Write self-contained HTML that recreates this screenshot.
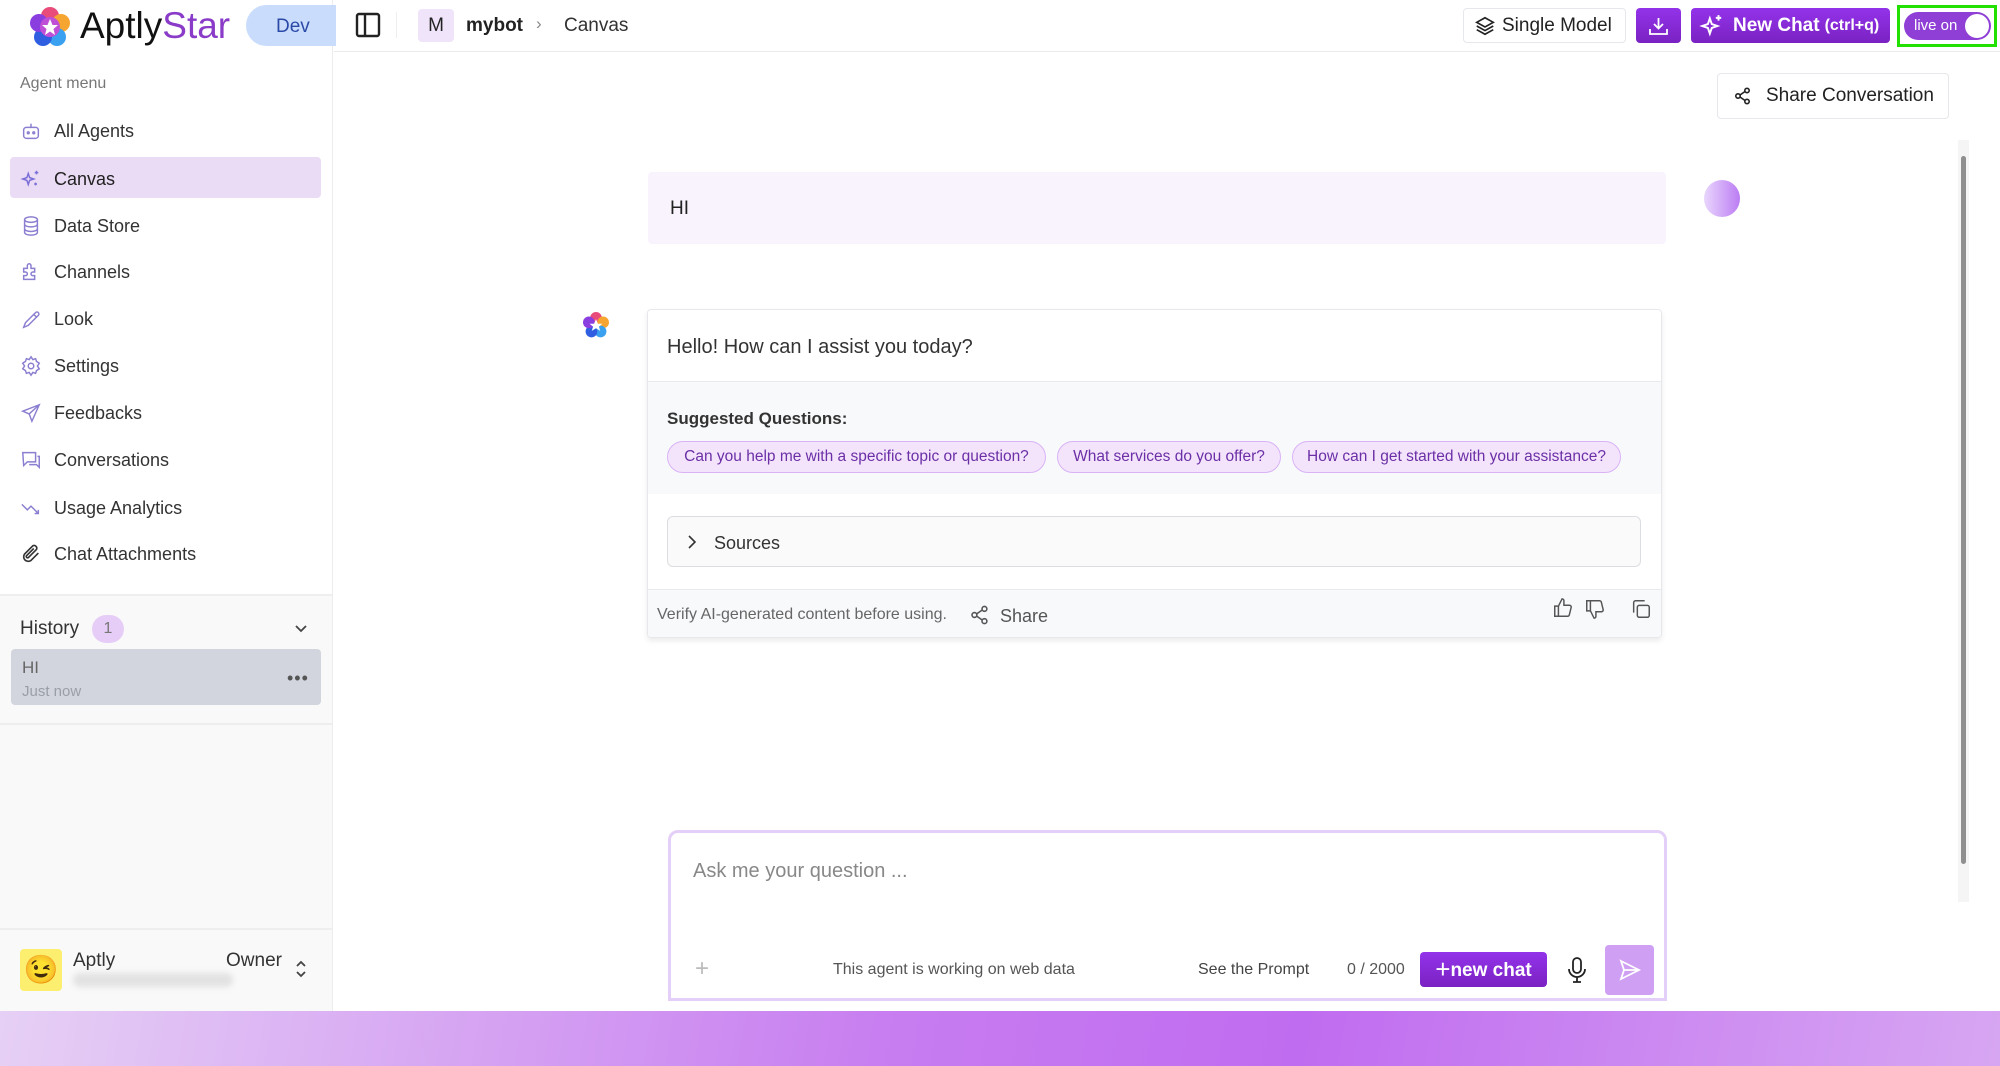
<!DOCTYPE html>
<html><head><meta charset="utf-8"><style>
*{box-sizing:border-box;margin:0;padding:0}
body{width:2000px;height:1066px;overflow:hidden;font-family:"Liberation Sans",sans-serif;background:#fff;position:relative;color:#222}
.a{position:absolute}
.side{left:0;top:0;width:333px;height:1011px;background:#fff;border-right:1px solid #ececec}
.mi{position:absolute;left:20px;height:40px;display:flex;align-items:center;font-size:18px;color:#333}
.mi svg{width:22px;height:22px;margin-left:0;margin-right:12px}
.chip{position:absolute;top:441px;height:32px;border:1px solid #d9b3f5;background:#f3e4fc;border-radius:16px;color:#6b2fa6;font-size:15.5px;display:flex;align-items:center;justify-content:center}
</style></head><body>
<div class="a side">
 <svg class="a" style="left:30px;top:7px" width="40" height="40" viewBox="0 0 40 40"><circle cx="20" cy="9" r="9" fill="#e94b7a"/><circle cx="31" cy="16" r="9" fill="#f7a531"/><circle cx="27" cy="30" r="9" fill="#3aa0f0"/><circle cx="13" cy="30" r="9" fill="#2f5fe0"/><circle cx="9" cy="16" r="9" fill="#8b3ee0"/><circle cx="20" cy="20" r="10" fill="#c04fd8"/><polygon points="20,12 22.5,18 28,18 23.5,22 25,28 20,24.5 15,28 16.5,22 12,18 17.5,18" fill="#fff"/></svg>
 <div class="a" style="left:80px;top:5px;font-size:37px;color:#111">Aptly<span style="color:#8a3cc8">Star</span></div>
 <div class="a" style="left:246px;top:5px;width:90px;height:41px;background:#c9dcfb;border-radius:21px 0 0 21px;color:#2b4aa8;font-size:19px;padding:11px 0 0 30px">Dev</div>
 <div class="a" style="left:20px;top:75px;font-size:16px;color:#777">Agent menu</div>
 <div class="a" style="left:10px;top:157px;width:311px;height:41px;background:#ebdcf5;border-radius:4px"></div>
 <div class="mi" style="top:111px"><svg viewBox="0 0 24 24" fill="none" stroke="#8a7fd0" stroke-width="1.6"><rect x="4" y="8" width="16" height="12" rx="3"/><circle cx="9" cy="14" r="1"/><circle cx="15" cy="14" r="1"/><path d="M12 8V4"/></svg>All Agents</div>
 <div class="mi" style="top:159px;color:#222"><svg viewBox="0 0 24 24" fill="none" stroke="#7b6fd8" stroke-width="1.6"><path d="M9 6l1.5 4.5L15 12l-4.5 1.5L9 18l-1.5-4.5L3 12l4.5-1.5z"/><path d="M18 3v4M16 5h4M17 16v3M15.5 17.5h3"/></svg>Canvas</div>
 <div class="mi" style="top:206px"><svg viewBox="0 0 24 24" fill="none" stroke="#8a7fd0" stroke-width="1.6"><ellipse cx="12" cy="5" rx="7" ry="3"/><path d="M5 5v14c0 1.7 3 3 7 3s7-1.3 7-3V5M5 10c0 1.7 3 3 7 3s7-1.3 7-3M5 15c0 1.7 3 3 7 3s7-1.3 7-3"/></svg>Data Store</div>
 <div class="mi" style="top:252px"><svg viewBox="0 0 24 24" fill="none" stroke="#8a7fd0" stroke-width="1.6"><path d="M4 8h4V5a2 2 0 014 0v3h4v4h-2a2 2 0 000 4h2v4H4v-4h2a2 2 0 000-4H4z"/></svg>Channels</div>
 <div class="mi" style="top:299px"><svg viewBox="0 0 24 24" fill="none" stroke="#8a7fd0" stroke-width="1.6"><path d="M4 21l2-5 9-9 3 3-9 9zM15 7l2-2a2 2 0 013 3l-2 2"/></svg>Look</div>
 <div class="mi" style="top:346px"><svg viewBox="0 0 24 24" fill="none" stroke="#8a7fd0" stroke-width="1.6"><circle cx="12" cy="12" r="3"/><path d="M12 2l2 3 3-1 1 3 3 2-2 3 2 3-3 2-1 3-3-1-2 3-2-3-3 1-1-3-3-2 2-3-2-3 3-2 1-3 3 1z"/></svg>Settings</div>
 <div class="mi" style="top:393px"><svg viewBox="0 0 24 24" fill="none" stroke="#8a7fd0" stroke-width="1.6"><path d="M21 3L3 10l7 3 3 8z M10 13l11-10"/></svg>Feedbacks</div>
 <div class="mi" style="top:440px"><svg viewBox="0 0 24 24" fill="none" stroke="#8a7fd0" stroke-width="1.6"><path d="M3 4h14v10H8l-4 4z M19 8h2v12l-3-3h-8"/></svg>Conversations</div>
 <div class="mi" style="top:488px"><svg viewBox="0 0 24 24" fill="none" stroke="#8a7fd0" stroke-width="1.6"><path d="M2 8l6 6 4-4 8 8M16 18h4v-4"/></svg>Usage Analytics</div>
 <div class="mi" style="top:534px"><svg viewBox="0 0 24 24" fill="none" stroke="#333" stroke-width="1.8"><path d="M20 11l-8 8a5 5 0 01-7-7l9-9a3 3 0 014 4l-9 9a1.5 1.5 0 01-2-2l8-8"/></svg>Chat Attachments</div>
 <div class="a" style="left:0;top:594px;width:332px;height:417px;background:#f9f9f9;border-top:2px solid #eee"></div>
 <div class="a" style="left:20px;top:618px;font-size:19px;color:#333">History</div>
 <div class="a" style="left:92px;top:615px;width:32px;height:28px;border-radius:14px;background:#e6cdf7;color:#777;font-size:16px;text-align:center;line-height:28px">1</div>
 <svg class="a" style="left:293px;top:620px" width="16" height="16" viewBox="0 0 16 16"><path d="M3 6l5 5 5-5" stroke="#444" stroke-width="1.8" fill="none"/></svg>
 <div class="a" style="left:11px;top:649px;width:310px;height:56px;background:#d2d5dd;border-radius:4px"></div>
 <div class="a" style="left:22px;top:658px;font-size:17px;color:#666">HI</div>
 <div class="a" style="left:22px;top:683px;font-size:15px;color:#9a9ea8">Just now</div>
 <div class="a" style="left:287px;top:668px;font-size:18px;color:#555;letter-spacing:1px">•••</div>
 <div class="a" style="left:0;top:723px;width:332px;height:2px;background:#eee"></div>
 <div class="a" style="left:0;top:928px;width:332px;height:2px;background:#eee"></div>
 <div class="a" style="left:20px;top:949px;width:42px;height:42px;background:#fcee6e;border-radius:4px;font-size:28px;text-align:center;line-height:42px">😉</div>
 <div class="a" style="left:73px;top:950px;font-size:19px;color:#333">Aptly</div>
 <div class="a" style="left:73px;top:973px;width:160px;height:14px;background:#e2e2e2;border-radius:7px;filter:blur(3px)"></div>
 <div class="a" style="left:226px;top:950px;font-size:19px;color:#333">Owner</div>
 <svg class="a" style="left:294px;top:958px" width="14" height="22" viewBox="0 0 14 22"><path d="M3 8l4-4 4 4M3 14l4 4 4-4" stroke="#444" stroke-width="1.8" fill="none"/></svg>
</div>
<div class="a" style="left:334px;top:51px;width:1666px;height:1px;background:#eaeaea"></div>
<svg class="a" style="left:354px;top:11px" width="28" height="28" viewBox="0 0 28 28"><rect x="3" y="3" width="22" height="22" rx="2" stroke="#222" stroke-width="2.4" fill="none"/><path d="M11 3v22" stroke="#222" stroke-width="2.4"/></svg>
<div class="a" style="left:396px;top:12px;width:1px;height:26px;background:#eee"></div>
<div class="a" style="left:418px;top:9px;width:36px;height:33px;background:#f0e4fb;border-radius:4px;font-size:19px;text-align:center;line-height:33px;color:#222">M</div>
<div class="a" style="left:466px;top:15px;font-size:19px;color:#222;font-weight:bold">mybot</div>
<div class="a" style="left:536px;top:14px;font-size:17px;color:#888">›</div>
<div class="a" style="left:564px;top:15px;font-size:19px;color:#333">Canvas</div>
<div class="a" style="left:1463px;top:8px;width:163px;height:35px;border:1px solid #e5e7eb;border-radius:4px;font-size:19px;display:flex;align-items:center;padding-left:10px"><svg width="22" height="22" viewBox="0 0 24 24" fill="none" stroke="#222" stroke-width="1.8" style="margin-right:6px"><path d="M12 3l9 5-9 5-9-5z M3 12l9 5 9-5 M3 16l9 5 9-5"/></svg>Single Model</div>
<div class="a" style="left:1636px;top:8px;width:45px;height:35px;background:linear-gradient(#9333ea,#7a22c2);border-radius:4px"><svg style="margin:8px 0 0 12px" width="21" height="20" viewBox="0 0 21 20" fill="none" stroke="#fff" stroke-width="1.8"><path d="M10.5 2v10M6 8l4.5 4.5L15 8M2 13v5h17v-5"/></svg></div>
<div class="a" style="left:1691px;top:8px;width:199px;height:35px;background:linear-gradient(#9333ea,#7a22c2);border-radius:4px;color:#fff;font-size:19px;font-weight:bold;display:flex;align-items:center;padding-left:8px"><svg width="26" height="26" viewBox="0 0 24 24" fill="none" stroke="#fff" stroke-width="1.8" style="margin-right:8px"><path d="M10 5l1.8 5.2L17 12l-5.2 1.8L10 19l-1.8-5.2L3 12l5.2-1.8z M18 2v5M15.5 4.5h5"/></svg>New Chat <span style="font-size:16px;margin-left:5px">(ctrl+q)</span></div>
<div class="a" style="left:1897px;top:5px;width:100px;height:42px;border:3px solid #22e000"></div>
<div class="a" style="left:1904px;top:12px;width:87px;height:28px;background:#8f3fd6;border-radius:14px;color:#fff;font-size:15px;line-height:28px;padding-left:10px">live on<div class="a" style="right:2px;top:2px;width:24px;height:24px;border-radius:12px;background:#fff"></div></div>
<div class="a" style="left:1717px;top:73px;width:232px;height:46px;border:1px solid #e5e7eb;border-radius:4px;font-size:19px;display:flex;align-items:center;padding-left:16px"><svg width="18" height="18" viewBox="0 0 18 18" fill="none" stroke="#222" stroke-width="1.6" style="margin-right:14px"><circle cx="4" cy="9" r="2.2"/><circle cx="13" cy="3.5" r="2.2"/><circle cx="13" cy="14.5" r="2.2"/><path d="M6 8l5-3.5M6 10l5 3.5"/></svg>Share Conversation</div>
<div class="a" style="left:1958px;top:140px;width:11px;height:762px;background:#f5f5f5"></div>
<div class="a" style="left:1961px;top:156px;width:5px;height:708px;background:#8f8f8f;border-radius:3px"></div>
<div class="a" style="left:648px;top:172px;width:1018px;height:72px;background:#f9f3fe;border-radius:4px;font-size:19px;padding:26px 22px">HI</div>
<div class="a" style="left:1704px;top:180px;width:36px;height:37px;border-radius:50%;background:linear-gradient(90deg,#e9d6fd,#bb7cf3)"></div>
<svg class="a" style="left:583px;top:312px" width="26" height="26" viewBox="0 0 40 40"><circle cx="20" cy="9" r="9" fill="#e94b7a"/><circle cx="31" cy="16" r="9" fill="#f7a531"/><circle cx="27" cy="30" r="9" fill="#3aa0f0"/><circle cx="13" cy="30" r="9" fill="#2f5fe0"/><circle cx="9" cy="16" r="9" fill="#8b3ee0"/><polygon points="20,11 23,18 30,18 24.5,22.5 26.5,29 20,25 13.5,29 15.5,22.5 10,18 17,18" fill="#fff"/></svg>
<div class="a" style="left:647px;top:309px;width:1015px;height:329px;border:1px solid #e8e8ec;border-radius:4px;box-shadow:0 3px 6px rgba(0,0,0,.08);overflow:hidden">
 <div class="a" style="left:19px;top:26px;font-size:20px;color:#333">Hello! How can I assist you today?</div>
 <div class="a" style="left:0;top:71px;width:100%;height:113px;background:#f8f9fb;border-top:1px solid #e8eaee"></div>
 <div class="a" style="left:19px;top:99px;font-size:17px;font-weight:bold;color:#333">Suggested Questions:</div>
 <div class="a" style="left:19px;top:206px;width:974px;height:51px;border:1px solid #dcdde2;border-radius:6px;background:#fafafa;font-size:18px;padding:16px 0 0 46px;color:#333">Sources<svg class="a" style="left:18px;top:17px" width="12" height="16" viewBox="0 0 12 16"><path d="M3 2l6 6-6 6" stroke="#333" stroke-width="1.6" fill="none"/></svg></div>
 <div class="a" style="left:0;top:279px;width:100%;height:50px;background:#f8f9fb;border-top:1px solid #e8eaee"></div>
 <div class="a" style="left:9px;top:296px;font-size:16px;color:#666">Verify AI-generated content before using.</div>
 <svg class="a" style="left:322px;top:295px" width="20" height="20" viewBox="0 0 18 18" fill="none" stroke="#555" stroke-width="1.4"><circle cx="4" cy="9" r="2.2"/><circle cx="13" cy="3.5" r="2.2"/><circle cx="13" cy="14.5" r="2.2"/><path d="M6 8l5-3.5M6 10l5 3.5"/></svg>
 <div class="a" style="left:352px;top:296px;font-size:18px;color:#555">Share</div>
 <svg class="a" style="left:904px;top:287px" width="22" height="22" viewBox="0 0 24 24" fill="none" stroke="#555" stroke-width="1.6"><path d="M7 10v11H3V10zM7 10l4-8a2 2 0 012 2v5h6a2 2 0 012 2l-2 8a2 2 0 01-2 2H7"/></svg>
 <svg class="a" style="left:936px;top:288px" width="22" height="22" viewBox="0 0 24 24" fill="none" stroke="#555" stroke-width="1.6"><path d="M7 14V3H3v11zM7 14l4 8a2 2 0 002-2v-5h6a2 2 0 002-2l-2-8a2 2 0 00-2-2H7"/></svg>
 <svg class="a" style="left:982px;top:288px" width="22" height="22" viewBox="0 0 24 24" fill="none" stroke="#555" stroke-width="1.6"><rect x="8" y="8" width="13" height="13" rx="2"/><path d="M4 16V5a2 2 0 012-2h10"/></svg>
</div>
<div class="chip" style="left:667px;width:379px">Can you help me with a specific topic or question?</div>
<div class="chip" style="left:1057px;width:224px">What services do you offer?</div>
<div class="chip" style="left:1292px;width:329px">How can I get started with your assistance?</div>
<div class="a" style="left:668px;top:830px;width:999px;height:171px;border:3px solid #e3cff8;border-radius:10px 10px 0 0;background:#fff"></div>
<div class="a" style="left:693px;top:860px;font-size:20px;color:#888">Ask me your question ...</div>
<div class="a" style="left:695px;top:955px;font-size:24px;color:#bbb">+</div>
<div class="a" style="left:833px;top:961px;font-size:16px;color:#555">This agent is working on web data</div>
<div class="a" style="left:1198px;top:961px;font-size:16px;color:#444">See the Prompt</div>
<div class="a" style="left:1347px;top:961px;font-size:16px;color:#555">0 / 2000</div>
<div class="a" style="left:1420px;top:952px;width:127px;height:35px;background:linear-gradient(#9333ea,#7a22c2);border-radius:4px;color:#fff;font-size:19px;font-weight:bold;line-height:35px;text-align:center"><span style="font-size:26px;font-weight:normal;vertical-align:-2px">+</span>new chat</div>
<svg class="a" style="left:1566px;top:956px" width="22" height="28" viewBox="0 0 22 28" fill="none" stroke="#222" stroke-width="1.8"><rect x="7" y="2" width="8" height="15" rx="4"/><path d="M3 13a8 8 0 0016 0M11 21v5M7 26h8"/></svg>
<div class="a" style="left:1605px;top:945px;width:49px;height:50px;background:#cf9ff3;border-radius:4px"><svg style="margin:13px 0 0 13px" width="24" height="24" viewBox="0 0 24 24" fill="none" stroke="#fff" stroke-width="1.8"><path d="M3 3l18 9-18 9 3-9zM6 12h15"/></svg></div>
<div class="a" style="left:0;top:1011px;width:2000px;height:55px;background:linear-gradient(100deg,#e6d0f5 0%,#c77cf0 45%,#c06cf0 65%,#d7a6f2 100%)"></div>
</body></html>
